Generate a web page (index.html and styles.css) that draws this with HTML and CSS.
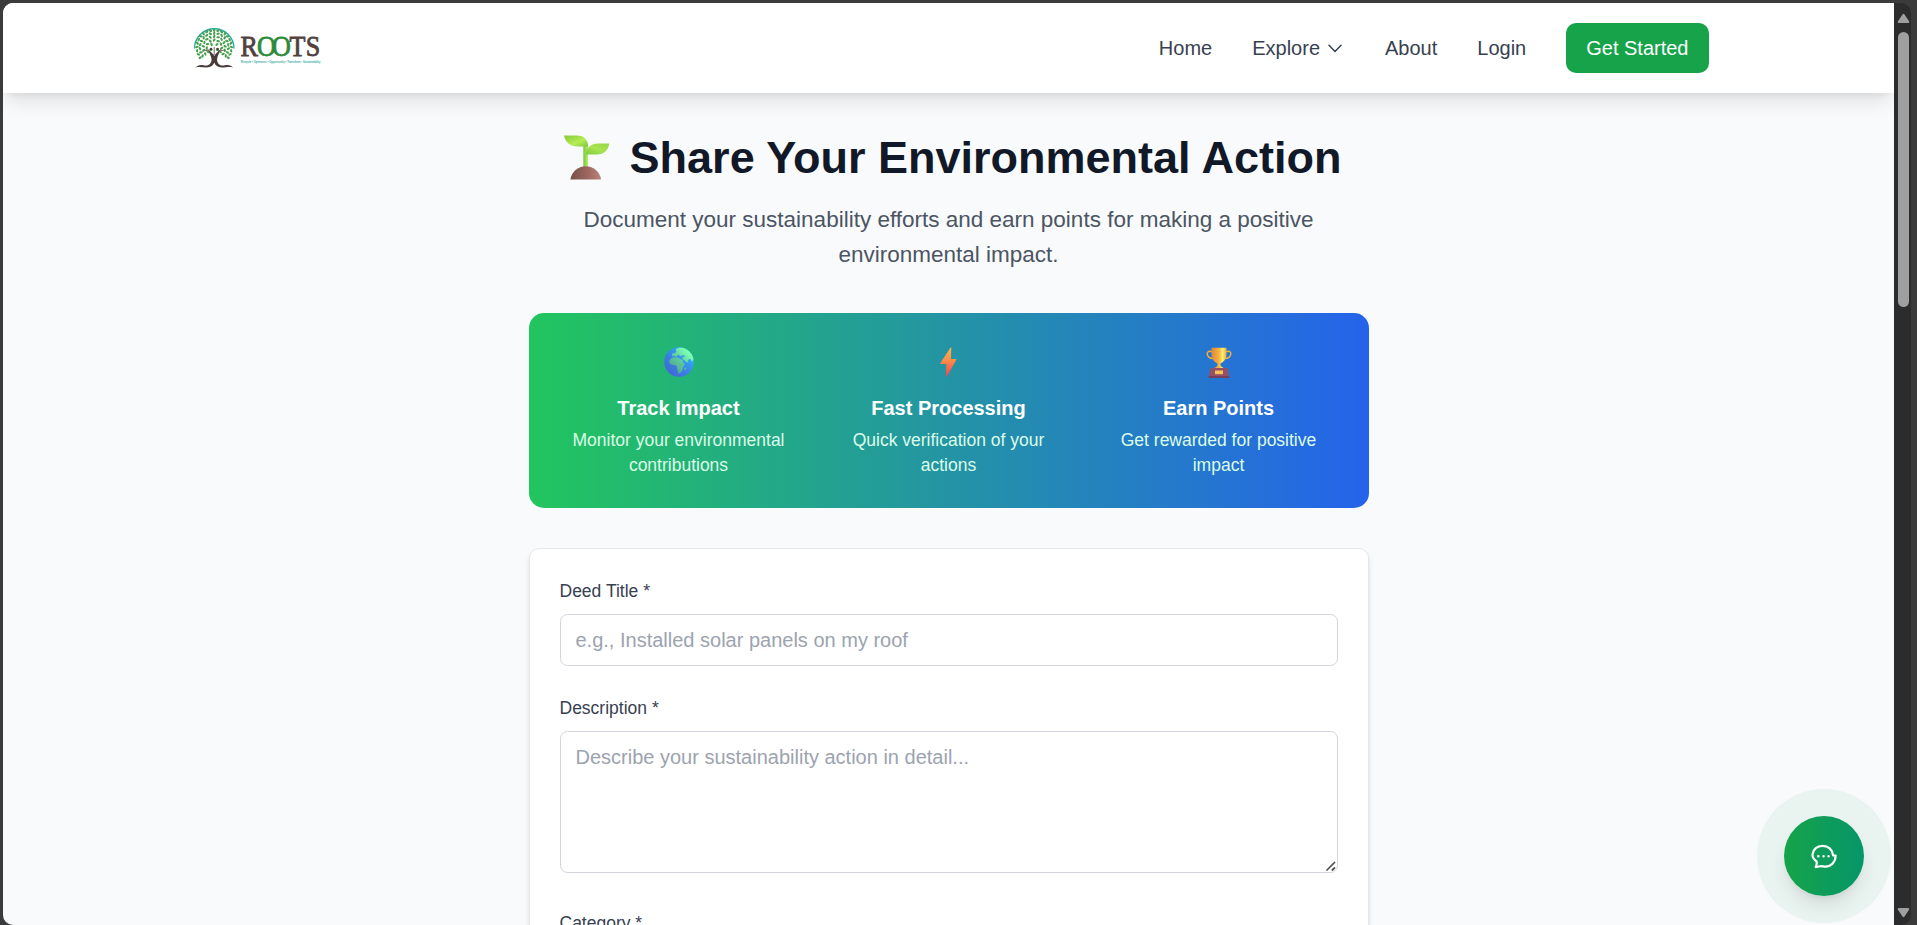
FILE: index.html
```html
<!DOCTYPE html>
<html lang="en">
<head>
<meta charset="utf-8">
<title>ROOTS - Share Your Environmental Action</title>
<link rel="stylesheet" href="styles.css">
</head>
<body>
<div class="window">
  <div class="page">
    <header class="header">
      <div class="header-inner">
        <svg class="logo" id="logo" width="140" height="50" viewBox="0 0 140 50" aria-label="ROOTS">
          <path d="M5.500 25.500A19.700 19.700 0 0 1 45 25.500" fill="none" stroke="#2ba9a4" stroke-width="1.400"/>
          <g id="leaves" fill="#45a04c"></g>
          <path d="M25.200 24v8M24.500 33l-6-7M26 33l6-7M20 28l-5-1M30.500 28l5-1" fill="none" stroke="#6d5a55" stroke-width=".9"/>
          <circle cx="22" cy="26" r="1.300" fill="#473a38"/><circle cx="28.600" cy="26" r="1.300" fill="#473a38"/>
          <path d="M20 27c1.500 2.500 4 3 5.300 6 1.300-3 3.700-3.500 5.200-6 0 4-2.500 6-2.500 10 .8 5 4 6 8 5.200 4-.8 6 .3 8 2.300-4-1-7 0-11 0-4.500-.3-6.500-2-7.700-5-1.200 3-3.200 4.700-7.700 5-4 0-7-1-11 0 2-2 4-3.100 8-2.300 4 .8 7.200-.2 8-5.200 0-4-2.600-6-2.600-10z" fill="#473a38"/>
          <text transform="scale(.9 1)" y="32.700" font-family="Liberation Serif, serif" font-size="29" fill="#51403d" stroke="#51403d" stroke-width=".8"><tspan x="57.200">R</tspan><tspan x="75.500" fill="#2c8a3b" stroke="#2c8a3b">O</tspan><tspan x="92.300" fill="#2c8a3b" stroke="#2c8a3b">O</tspan><tspan x="111.800">T</tspan><tspan x="129.800">S</tspan></text>
          <text x="52" y="39.600" textLength="79.500" lengthAdjust="spacingAndGlyphs" font-family="Liberation Sans, sans-serif" font-weight="bold" font-size="2.900" fill="#38aaa8">Recycle • Openness • Opportunity • Transform • Sustainability</text>
        </svg>
        <nav class="nav">
          <a class="nav-link">Home</a>
          <a class="nav-link explore">Explore
            <svg width="20" height="20" viewBox="0 0 20 20" fill="none" stroke="#374151" stroke-width="1.500" stroke-linecap="round" stroke-linejoin="round"><path d="M4 7.200l6 6.200 6-6.200"/></svg>
          </a>
          <a class="nav-link">About</a>
          <a class="nav-link">Login</a>
          <a class="button">Get Started</a>
        </nav>
      </div>
    </header>

    <main class="main">
      <h1 class="title">
        <svg class="sprout" width="46" height="45" viewBox="0 0 46 45">
          <defs>
            <linearGradient id="leafA" x1="0" y1="0" x2="1" y2="1"><stop offset="0" stop-color="#86c93a"/><stop offset=".6" stop-color="#b4ee55"/><stop offset="1" stop-color="#7ec33e"/></linearGradient>
            <linearGradient id="leafB" x1="0" y1="1" x2="1" y2="0"><stop offset="0" stop-color="#7fc93e"/><stop offset=".5" stop-color="#a9e552"/><stop offset="1" stop-color="#96d644"/></linearGradient>
            <linearGradient id="stem"><stop offset="0" stop-color="#79c744"/><stop offset="1" stop-color="#b0ee5a"/></linearGradient>
            <linearGradient id="soil"><stop offset="0" stop-color="#77504b"/><stop offset=".6" stop-color="#a06861"/><stop offset="1" stop-color="#b9857e"/></linearGradient>
          </defs>
          <path d="M19.300 10h4.600v22h-4.600z" fill="url(#stem)"/>
          <path d="M0 .5h13C20 .5 24 5 24.300 11.500H14C6 11.500 1 7 0 .5z" fill="url(#leafA)"/>
          <path d="M45.300 8.500H34c-7 0-12 4-12.500 11H33c7 0 11-4 12.300-11z" fill="url(#leafB)"/>
          <path d="M6.500 44.500a15.300 14.300 0 0 1 30.500 0z" fill="url(#soil)"/>
        </svg>
        <span>Share Your Environmental Action</span>
      </h1>
      <p class="lead">Document your sustainability efforts and earn points for making a positive environmental impact.</p>

      <section class="banner">
        <div class="feature">
          <div class="feature-icon">
            <svg width="30" height="30" viewBox="0 0 30 30">
              <defs>
                <linearGradient id="sea" x1="0" y1="1" x2="1" y2="0"><stop offset="0" stop-color="#4360cc"/><stop offset=".4" stop-color="#3b7be3"/><stop offset=".75" stop-color="#2fa8f6"/><stop offset="1" stop-color="#35bdf8"/></linearGradient>
                <linearGradient id="land" gradientUnits="userSpaceOnUse" x1="5" y1="24" x2="23" y2="5"><stop offset="0" stop-color="#4b9c8c"/><stop offset=".55" stop-color="#5cc69d"/><stop offset="1" stop-color="#7dffb4"/></linearGradient>
                <clipPath id="ball"><circle cx="15" cy="15" r="14.700"/></clipPath>
              </defs>
              <circle cx="15" cy="15" r="14.700" fill="url(#sea)"/>
              <g clip-path="url(#ball)" fill="url(#land)">
                <path d="M5 14l3-3.500h6l2 1.500 2.500 1 1.200 3.500h1.500l-2 3.500-.7 3-2.500 3.500h-1.500l-1.200-3.500-.8-4.500-3.500-.5-3-1z"/>
                <path d="M8 9V6.500l3-.5 1.500-1.500-1-2L15 .5h16v13.500l-2-1-1 2-1.500-3-2 .5-1 3-2-.5-.5-1.500-2-.5-1-2.500 2.500-.5.500-1.500h-3l-1.500 1-2-2-2 2z"/>
                <path d="M21 20.500l1.300.5-.8 2-1.300-.5z"/>
              </g>
            </svg>
          </div>
          <h3>Track Impact</h3>
          <p>Monitor your environmental contributions</p>
        </div>
        <div class="feature">
          <div class="feature-icon">
            <svg width="17" height="30" viewBox="0 0 17 30">
              <defs><linearGradient id="bolt" x1="0" y1="0" x2="0" y2="1"><stop offset="0" stop-color="#fbb34c"/><stop offset=".45" stop-color="#fb8d49"/><stop offset="1" stop-color="#f6414f"/></linearGradient></defs>
              <path d="M10.500.5h.8L11 12h4.800c.6 0 .7.400.4.900L6.800 29.500H6L6.300 17H.900c-.6 0-.8-.4-.5-.9z" fill="url(#bolt)"/>
            </svg>
          </div>
          <h3>Fast Processing</h3>
          <p>Quick verification of your actions</p>
        </div>
        <div class="feature">
          <div class="feature-icon">
            <svg width="26" height="31" viewBox="0 0 26 31">
              <defs>
                <linearGradient id="cup"><stop offset="0" stop-color="#df8736"/><stop offset=".5" stop-color="#f5b342"/><stop offset=".75" stop-color="#fff26d"/><stop offset="1" stop-color="#e5a93c"/></linearGradient>
              </defs>
              <path d="M6.500 5.200C3.500 3.500 1 4.500 1.200 7s2.800 4.800 6.300 4.600M19.500 5.200C22.500 3.500 25 4.500 24.800 7s-2.800 4.800-6.300 4.600" fill="none" stroke="#eeb044" stroke-width="1.500"/>
              <path d="M5.500.8h15v7c0 4-2.500 7.200-6 8.700V18c.4 1.500 1.500 2 3 3h-9c1.500-1 2.600-1.500 3-3v-1.500c-3.500-1.500-6-4.700-6-8.700z" fill="url(#cup)"/>
              <path d="M4.500 21h17l2 10h-21z" fill="#955064"/>
              <path d="M3 29h20l.5 2h-21z" fill="#78405f"/>
              <path d="M9 23.500h8v3.700H9z" fill="#f6c257"/>
            </svg>
          </div>
          <h3>Earn Points</h3>
          <p>Get rewarded for positive impact</p>
        </div>
      </section>

      <form class="card">
        <div class="field">
          <label for="deed">Deed Title *</label>
          <input class="control" id="deed" type="text" placeholder="e.g., Installed solar panels on my roof">
        </div>
        <div class="field">
          <label for="desc">Description *</label>
          <div class="area">
            <textarea class="control" id="desc" placeholder="Describe your sustainability action in detail..."></textarea>
            <svg class="grip" width="10" height="10" viewBox="0 0 10 10" stroke="#505050" stroke-width="1.700" stroke-linecap="round"><path d="M1 9L8.500 1.500M6.300 9L8.500 7"/></svg>
          </div>
        </div>
        <div class="field">
          <label>Category *</label>
          <div class="control"></div>
        </div>
      </form>
    </main>

    <div class="chat-halo">
      <button class="chat" type="button" aria-label="Open chat">
        <svg width="26" height="25" viewBox="0 0 26 25" fill="none" stroke="#fff" stroke-width="2.200" stroke-linejoin="round" stroke-linecap="round">
          <path d="M5.600 17.500C2.800 15.500 1.200 13.500 1.500 10.500 2 5 6.300 1.800 11.500 1.800c5.700 0 10 3.700 10.600 9.700l2.500.2c-.1 6.300-4.400 10.900-10.200 10.900-1.700 0-3-.5-4.500-.5-1.600 0-3 1-5.200 1 .8-1.500 1.500-3 .9-5.600z"/>
          <path d="M7.300 12.200h.1M12.500 12.200h.1M17.500 12.200h.1" stroke-width="2.400"/>
        </svg>
      </button>
    </div>
  </div>
  <div class="scrollbar">
    <svg width="13" height="11" viewBox="0 0 13 11"><path d="M5.500 1.500q1-1.500 2 0l4.700 7q.6 1.500-1 1.500H1.800q-1.600 0-1-1.500z" fill="#9f9f9f"/></svg>
    <div class="thumb"></div>
    <svg class="down" width="13" height="11" viewBox="0 0 13 11"><path d="M5.500 9.500q1 1.500 2 0l4.700-7q.6-1.500-1-1.500H1.800q-1.600 0-1 1.500z" fill="#9f9f9f"/></svg>
  </div>
</div>
<script src="leaves.js"></script>
</body>
</html>
```
FILE: styles.css
```css
* { box-sizing: border-box; }
body {
  margin: 0;
  height: 925px;
  overflow: hidden;
  background: #3b3b3b;
  font-family: "Liberation Sans", Arial, sans-serif;
  color: #111827;
}
h1, h3, p { margin: 0; }
.window {
  display: flex;
  width: 1908px;
  height: 922px;
  margin: 3px 0 0 3px;
  border-radius: 10px;
  overflow: hidden;
}
.page {
  position: relative;
  width: 1891px;
  height: 922px;
  overflow: hidden;
  background: #f9fafc;
}
.header {
  position: relative;
  z-index: 2;
  height: 90px;
  background: #fff;
  box-shadow: 0 12.5px 18.75px -3.75px rgba(0,0,0,.1), 0 5px 7.5px -5px rgba(0,0,0,.1);
}
.header-inner {
  display: flex;
  align-items: center;
  justify-content: space-between;
  width: 1520px;
  height: 90px;
  margin: 0 auto;
}
.logo { display: block; }
.nav { display: flex; align-items: center; gap: 40px; font-size: 20px; line-height: 30px; color: #374151; }
.nav-link { display: flex; align-items: center; }
.explore { gap: 5px; }
.button { padding: 10px 20px; border-radius: 10px; background: #16a34a; color: #fff; }

.main { width: 840px; margin: 0 auto; padding-top: 40px; }
.title { display: flex; justify-content: center; gap: 20px; padding-left: 8px; font-size: 45px; line-height: 50px; font-weight: 700; white-space: nowrap; }
.sprout { margin-top: 2px; }
.lead { width: 780px; margin: 19px auto 0; font-size: 22.5px; line-height: 35px; text-align: center; color: #4b5563; }

.banner {
  display: grid;
  grid-template-columns: repeat(3, 240px);
  gap: 30px;
  height: 195px;
  margin-top: 41px;
  padding: 30px;
  border-radius: 15px;
  background: linear-gradient(to right, #22c55e, #2563eb);
  color: #fff;
  text-align: center;
}
.feature-icon { display: flex; align-items: center; justify-content: center; height: 40px; margin-bottom: 10px; padding-bottom: 2px; }
.feature h3 { font-size: 20px; line-height: 30px; }
.feature p { margin-top: 5px; font-size: 17.5px; line-height: 25px; color: #dcfce7; }

.card {
  height: 600px;
  margin-top: 40px;
  padding: 30px;
  border: 1px solid #e5e7eb;
  border-radius: 10px;
  background: #fff;
  box-shadow: 0 5px 7.5px -1.25px rgba(0,0,0,.1), 0 2.5px 5px -2.5px rgba(0,0,0,.1);
}
.field { margin-bottom: 30px; }
.field label { display: block; margin-bottom: 10px; font-size: 17.5px; line-height: 25px; color: #374151; }
.control {
  display: block;
  width: 100%;
  height: 52px;
  padding: 10px 15px;
  border: 1px solid #d1d5db;
  border-radius: 7.5px;
  background: #fff;
  font: 20px/30px "Liberation Sans", Arial, sans-serif;
}
.control::placeholder { color: #9ca3af; opacity: 1; }
.area { position: relative; margin-bottom: 38px; }
textarea.control { height: 142px; resize: none; }
.grip { position: absolute; right: 2px; bottom: 2px; }

.chat-halo {
  position: absolute;
  z-index: 3;
  left: 1754px;
  top: 786px;
  display: grid;
  place-items: center;
  width: 134px;
  height: 134px;
  border-radius: 50%;
  background: #e9f3f0;
}
.chat {
  display: grid;
  place-items: center;
  width: 80px;
  height: 80px;
  padding: 0;
  border: 0;
  border-radius: 50%;
  background: linear-gradient(to right, #16a34a, #059669);
  box-shadow: 0 12.5px 18.75px -3.75px rgba(0,0,0,.1), 0 5px 7.5px -5px rgba(0,0,0,.1);
}
.scrollbar {
  display: flex;
  flex-direction: column;
  align-items: center;
  width: 17px;
  height: 922px;
  padding: 10px 0 7px 1px;
  background: #2c2c2c;
}
.thumb { width: 11px; height: 275px; margin-top: 8px; border-radius: 6px; background: #9f9f9f; }
.down { margin-top: auto; }
```
FILE: leaves.js
```js
// Scatter the logo's leaves in rings around the crown of the tree.
const crown = document.getElementById('leaves');
[[4, 4], [7.500, 9], [11, 13], [14.300, 17], [17.300, 21]].forEach(([radius, count], ring) => {
  for (let i = 0; i < count; i++) {
    const angle = Math.PI * (0.8 + 1.4 * i / (count - 1));
    const leaf = document.createElementNS('http://www.w3.org/2000/svg', 'ellipse');
    const x = 25.2 + radius * Math.cos(angle);
    const y = 24.5 + radius * Math.sin(angle);
    leaf.setAttribute('rx', 1.8);
    leaf.setAttribute('ry', 1.1);
    leaf.setAttribute('transform', `translate(${x} ${y}) rotate(${(i * 67 + ring * 35) % 180})`);
    crown.appendChild(leaf);
  }
});
```
